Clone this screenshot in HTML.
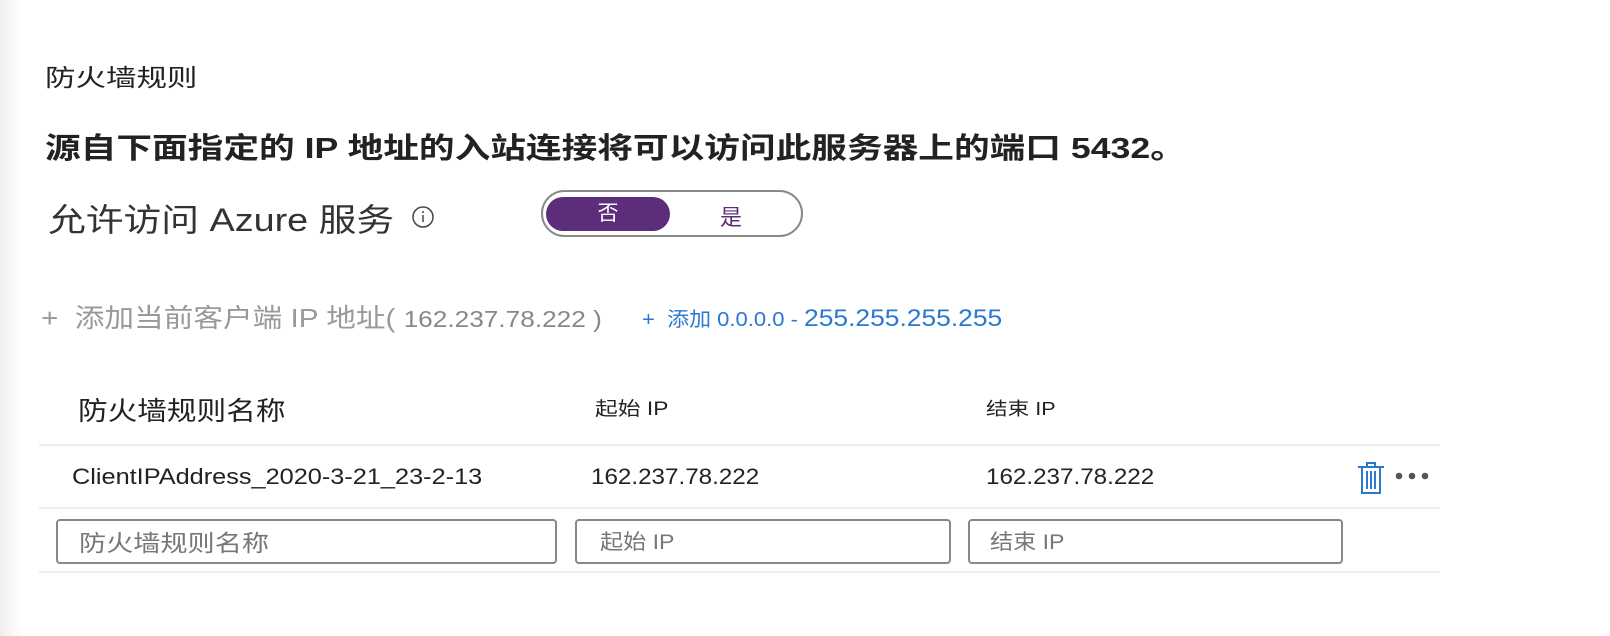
<!DOCTYPE html>
<html><head><meta charset="utf-8"><style>
body{margin:0;width:1610px;height:636px;background:#fff;position:relative;overflow:hidden;font-family:"Liberation Sans","Noto Sans CJK SC",sans-serif;color:#222}
.a{position:absolute;white-space:nowrap;transform-origin:0 50%}
.line{position:absolute;left:39px;width:1401px;height:2px;background:#eee}
.inp{position:absolute;top:519px;height:45px;border:2px solid #888;border-radius:4px;box-sizing:border-box}
.it{position:absolute;white-space:nowrap;transform-origin:0 50%;font-size:21px;color:#777}
</style></head><body>
<div style="position:absolute;left:0;top:0;width:22px;height:636px;background:linear-gradient(to right,#eee,#fff)"></div>
<div class="a" style="left:45px;top:58px;font-size:24px;transform:scaleX(1.27)">防火墙规则</div>
<div class="a" style="left:45px;top:125px;font-size:29px;font-weight:bold;transform:scaleX(1.23)">源自下面指定的 IP 地址的入站连接将可以访问此服务器上的端口 5432。</div>
<div class="a" style="left:48px;top:195px;font-size:32px;color:#333;transform:scaleX(1.18)">允许访问 Azure 服务</div>
<svg class="a" style="left:411px;top:205px" width="24" height="24"><circle cx="12" cy="12" r="10" fill="none" stroke="#444" stroke-width="1.5"/><line x1="12" y1="10" x2="12" y2="17" stroke="#444" stroke-width="1.5"/><circle cx="12" cy="7" r="1" fill="#444"/></svg>
<div class="a" style="left:541px;top:190px;width:262px;height:47px;border:2px solid #888;border-radius:24px;box-sizing:border-box"></div>
<div class="a" style="left:546px;top:197px;width:124px;height:34px;background:#5c2d78;border-radius:17px;color:#fff;font-size:21px;text-align:center;line-height:34px">否</div>
<div class="a" style="left:720px;top:200px;font-size:22px;color:#5c2d78">是</div>
<div class="a" style="left:41px;top:298px;font-size:26px;color:#999;transform:scaleX(1.14)">+&nbsp; 添加当前客户端 IP 地址( <span style="font-size:23px;color:#888">162.237.78.222 )</span></div>
<div class="a" style="left:642px;top:303px;font-size:20px;color:#2b78d0;transform:scaleX(1.1)">+&nbsp; 添加 0.0.0.0 - <span style="font-size:24px">255.255.255.255</span></div>
<div class="a" style="left:78px;top:391px;font-size:26px;transform:scaleX(1.14)">防火墙规则名称</div>
<div class="a" style="left:595px;top:394px;font-size:19px;transform:scaleX(1.2)">起始 IP</div>
<div class="a" style="left:986px;top:395px;font-size:18px;transform:scaleX(1.2)">结束 IP</div>
<div class="line" style="top:444px"></div>
<div class="a" style="left:72px;top:464px;font-size:22px;transform:scaleX(1.15)">ClientIPAddress_2020-3-21_23-2-13</div>
<div class="a" style="left:591px;top:464px;font-size:22px;transform:scaleX(1.1)">162.237.78.222</div>
<div class="a" style="left:986px;top:464px;font-size:22px;transform:scaleX(1.1)">162.237.78.222</div>
<svg class="a" style="left:1355px;top:460px" width="34" height="36"><path d="M3 7H29M12 7V3H20V7M7 7V33H25V7" fill="none" stroke="#2b78d0" stroke-width="2"/><path d="M12 11V29M16 11V29M20 11V29" stroke="#2b78d0" stroke-width="2"/></svg>
<svg class="a" style="left:1390px;top:468px" width="44" height="16"><circle cx="9" cy="8" r="3.3" fill="#555"/><circle cx="22" cy="8" r="3.3" fill="#555"/><circle cx="35" cy="8" r="3.3" fill="#555"/></svg>
<div class="line" style="top:507px"></div>
<div class="inp" style="left:56px;width:501px"></div>
<div class="inp" style="left:575px;width:376px"></div>
<div class="inp" style="left:968px;width:375px"></div>
<div class="it" style="left:79px;top:524px;font-size:23px;transform:scaleX(1.18)">防火墙规则名称</div>
<div class="it" style="left:600px;top:526px;transform:scaleX(1.1)">起始 IP</div>
<div class="it" style="left:990px;top:526px;transform:scaleX(1.1)">结束 IP</div>
<div class="line" style="top:571px"></div>
</body></html>
